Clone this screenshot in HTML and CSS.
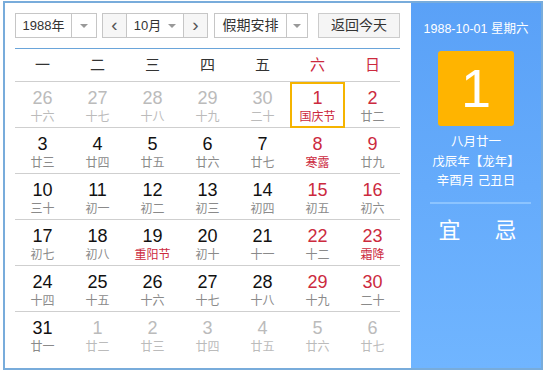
FILE: index.html
```html
<!DOCTYPE html>
<html lang="zh-CN">
<head>
    <meta charset="UTF-8"/>
    <title>万年历</title>
    <link rel="stylesheet" href="styles.css">
</head>
<body>
<div class="cal">
    <div class="main">
        <div class="bar">
            <div class="sel year"><span class="val">1988年</span><span class="drop"><i></i></span></div>
            <div class="sel month">
                <span class="nav">&lsaquo;</span>
                <span class="val">10月<i></i></span>
                <span class="nav">&rsaquo;</span>
            </div>
            <div class="sel hol"><span class="val">假期安排</span><span class="drop"><i></i></span></div>
            <div class="btn">返回今天</div>
        </div>
        <div class="grid">
            <div class="wk">一</div><div class="wk">二</div><div class="wk">三</div><div class="wk">四</div><div class="wk">五</div><div class="wk red">六</div><div class="wk red">日</div>

            <div class="day off"><b>26</b><small>十六</small></div>
            <div class="day off"><b>27</b><small>十七</small></div>
            <div class="day off"><b>28</b><small>十八</small></div>
            <div class="day off"><b>29</b><small>十九</small></div>
            <div class="day off"><b>30</b><small>二十</small></div>
            <div class="day red today"><b>1</b><small class="hl">国庆节</small></div>
            <div class="day red"><b>2</b><small>廿二</small></div>

            <div class="day"><b>3</b><small>廿三</small></div>
            <div class="day"><b>4</b><small>廿四</small></div>
            <div class="day"><b>5</b><small>廿五</small></div>
            <div class="day"><b>6</b><small>廿六</small></div>
            <div class="day"><b>7</b><small>廿七</small></div>
            <div class="day red"><b>8</b><small class="hl">寒露</small></div>
            <div class="day red"><b>9</b><small>廿九</small></div>

            <div class="day"><b>10</b><small>三十</small></div>
            <div class="day"><b>11</b><small>初一</small></div>
            <div class="day"><b>12</b><small>初二</small></div>
            <div class="day"><b>13</b><small>初三</small></div>
            <div class="day"><b>14</b><small>初四</small></div>
            <div class="day red"><b>15</b><small>初五</small></div>
            <div class="day red"><b>16</b><small>初六</small></div>

            <div class="day"><b>17</b><small>初七</small></div>
            <div class="day"><b>18</b><small>初八</small></div>
            <div class="day"><b>19</b><small class="hl">重阳节</small></div>
            <div class="day"><b>20</b><small>初十</small></div>
            <div class="day"><b>21</b><small>十一</small></div>
            <div class="day red"><b>22</b><small>十二</small></div>
            <div class="day red"><b>23</b><small class="hl">霜降</small></div>

            <div class="day"><b>24</b><small>十四</small></div>
            <div class="day"><b>25</b><small>十五</small></div>
            <div class="day"><b>26</b><small>十六</small></div>
            <div class="day"><b>27</b><small>十七</small></div>
            <div class="day"><b>28</b><small>十八</small></div>
            <div class="day red"><b>29</b><small>十九</small></div>
            <div class="day red"><b>30</b><small>二十</small></div>

            <div class="day last"><b>31</b><small>廿一</small></div>
            <div class="day off last"><b>1</b><small>廿二</small></div>
            <div class="day off last"><b>2</b><small>廿三</small></div>
            <div class="day off last"><b>3</b><small>廿四</small></div>
            <div class="day off last"><b>4</b><small>廿五</small></div>
            <div class="day off last"><b>5</b><small>廿六</small></div>
            <div class="day off last"><b>6</b><small>廿七</small></div>
        </div>
    </div>
    <div class="side">
        <p class="date">1988-10-01 星期六</p>
        <div class="big">1</div>
        <div class="lunar">
            <p>八月廿一</p>
            <p>戊辰年【龙年】</p>
            <p>辛酉月 己丑日</p>
        </div>
        <div class="yiji"><span>宜</span><span>忌</span></div>
    </div>
</div>
</body>
</html>
```

FILE: styles.css
```css
html {background:#fff;}
body {margin:1px 0 0 3px;font-family:"Liberation Sans", Arial, "Noto Sans CJK SC", sans-serif;color:#333;}
.cal {display:flex;width:536px;height:365px;border:2px solid #78acdb;}
.main {width:385px;padding:10px 11px 0 10px;}
.side {width:130px;background:linear-gradient(#5aa1f7, #70b5ff);color:#fff;text-align:center;}

.bar {display:flex;height:25px;}
.sel {display:flex;border:1px solid #c6c6c6;box-sizing:border-box;height:25px;font-size:13px;line-height:23px;}
.year {width:82px;margin-right:5px;}
.year .val {width:55px;text-align:center;}
.drop {flex:1;border-left:1px solid #c6c6c6;display:flex;align-items:center;justify-content:center;}
.drop i, .month .val i {display:inline-block;border:4px solid transparent;border-top:4px solid #999;border-bottom:0;}
.month {width:106px;margin-right:6px;}
.nav {width:23px;text-align:center;background:#f6f6f6;font-size:19px;color:#555;line-height:21px;}
.month .nav:first-child {border-right:1px solid #c6c6c6;}
.month .nav:last-child {border-left:1px solid #c6c6c6;}
.month .val {flex:1;display:flex;align-items:center;justify-content:center;gap:7px;color:#333;}
.hol {width:94px;margin-right:10px;}
.hol .val {width:71px;text-align:center;font-size:14px;}
.btn {width:82px;box-sizing:border-box;border:1px solid #ccc;background:#f5f5f5;text-align:center;font-size:14px;line-height:23px;}

.grid {display:grid;grid-template-columns:repeat(7, 55px);margin-top:10px;border-top:1px solid #6aa5da;}
.wk {height:32px;line-height:32px;text-align:center;font-size:15px;border-bottom:1px solid #cfcfcf;}
.day {height:45px;border-bottom:1px solid #cfcfcf;box-sizing:content-box;display:flex;flex-direction:column;align-items:center;}
.day.last {border-bottom:0;}
.day b {font-weight:normal;font-size:18px;line-height:22px;margin-top:5px;color:#111;}
.day small {font-size:12px;line-height:16px;color:#8a8a8a;}
.red, .day.red b {color:#cc2a3e;}
.day small.hl {color:#cc2a3e;}
.day.off b, .day.off small {color:#bbb;}
.today {box-sizing:border-box;height:46px;border:2px solid #f5b400;}
.today b {margin-top:3px;}

.date {margin:18px 0 0;font-size:12.5px;line-height:16px;}
.big {width:76px;height:75px;margin:14px auto 0;background:#ffb400;border-radius:3px;font-size:54px;line-height:75px;}
.lunar {margin-top:7px;font-size:12.5px;line-height:19.5px;}
.lunar p {margin:0;}
.yiji {margin:10px 10px 0 19px;border-top:2px solid #8cc4ff;padding:14px 6px 0 0;display:flex;justify-content:center;gap:34px;font-size:22px;line-height:26px;}
```
